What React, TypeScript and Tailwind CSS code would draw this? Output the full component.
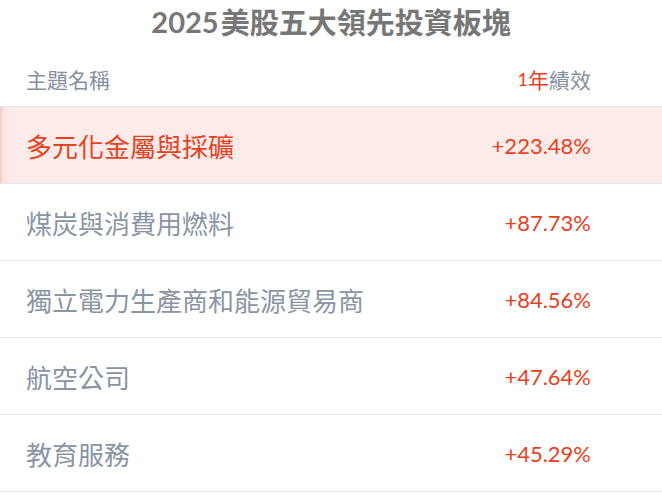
import React from "react";

const rows = [
  { name: "多元化金屬與採礦", value: "+223.48%", top: true },
  { name: "煤炭與消費用燃料", value: "+87.73%" },
  { name: "獨立電力生產商和能源貿易商", value: "+84.56%" },
  { name: "航空公司", value: "+47.64%" },
  { name: "教育服務", value: "+45.29%" },
];

export default function App() {
  return (
    <div className="w-[662px] h-[495px] bg-white overflow-hidden">
      {/* Title */}
      <h1 className="h-[44px] flex items-center justify-center font-bold text-[#777777] pb-[1px]">
        <span className="font-['Lato','Noto_Sans_CJK_TC',sans-serif] text-[29px] leading-none mr-[2px]">2025</span>
        <span className="font-['Noto_Sans_CJK_TC','Noto_Sans_CJK_SC',sans-serif] text-[29px] leading-none">
          美股五大領先投資板塊
        </span>
      </h1>

      {/* Header */}
      <div className="h-[63px] flex items-center justify-between pl-[26px] pr-[71px] pt-[9px] border-b border-[#e2e7ef] font-['Noto_Sans_CJK_TC',sans-serif] text-[21px] text-[#8590a0]">
        <span>主題名稱</span>
        <span className="flex items-center">
          <span className="font-['Lato',sans-serif] text-[18px] text-[#e8401c]">1</span>
          <span className="text-[#e8401c]">年</span>
          <span>績效</span>
        </span>
      </div>

      {/* Rows */}
      {rows.map((r) => (
        <div
          key={r.name}
          className={
            r.top
              ? "h-[77px] flex items-center justify-between pl-[26px] pr-[71px] border-b border-[#e2e7ef] bg-[linear-gradient(90deg,#f6cbc6_0px,#fce4e1_4px,#fdebe9_9px,#fdebe9_100%)]"
              : "h-[77px] flex items-center justify-between pl-[26px] pr-[71px] border-b border-[#e2e7ef]"
          }
        >
          <span
            className={
              r.top
                ? "font-['Noto_Sans_CJK_TC',sans-serif] text-[26px] text-[#e4421f]"
                : "font-['Noto_Sans_CJK_TC',sans-serif] text-[26px] text-[#8a95a4]"
            }
          >
            {r.name}
          </span>
          <span className="font-['Lato','Noto_Sans_CJK_TC',sans-serif] text-[22px] text-[#e8401c]">{r.value}</span>
        </div>
      ))}
    </div>
  );
}
